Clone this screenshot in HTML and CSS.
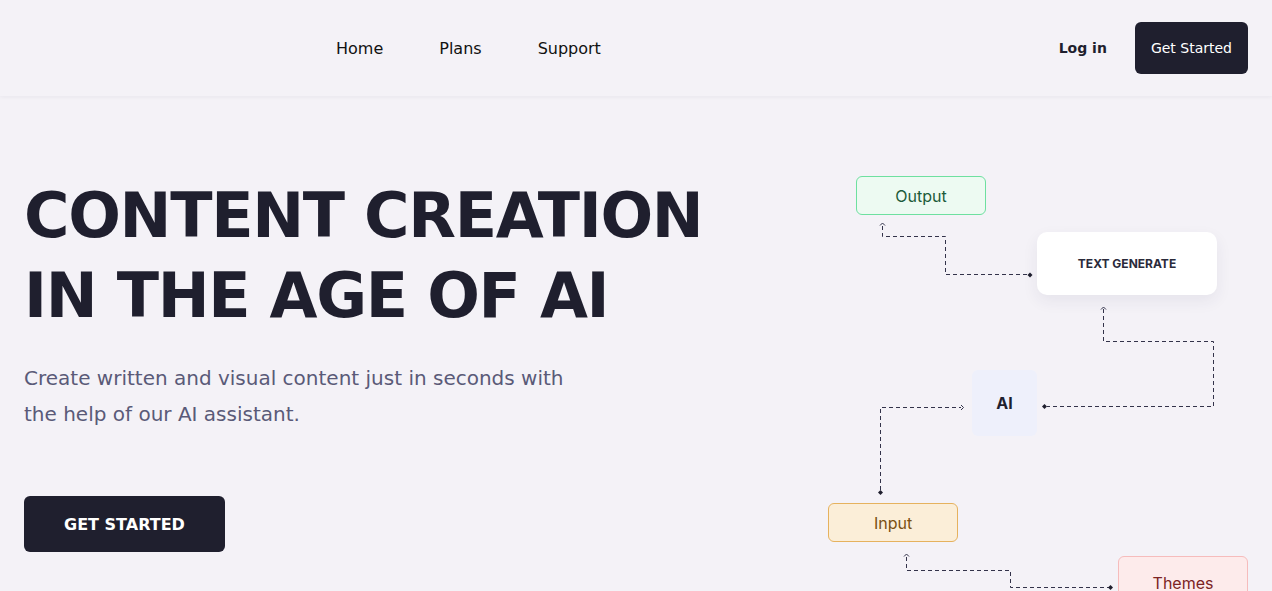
FILE: index.html
```html
<!DOCTYPE html>
<html lang="en">
<head>
<meta charset="utf-8">
<title>Content Creation in the Age of AI</title>
<link rel="stylesheet" href="styles.css">
</head>
<body>
<header class="header">
  <div class="logo-slot"></div>
  <nav class="nav">
    <a class="nav-link" href="#">Home</a>
    <a class="nav-link" href="#">Plans</a>
    <a class="nav-link" href="#">Support</a>
  </nav>
  <div class="actions">
    <a class="login" href="#">Log in</a>
    <a class="btn-small" href="#">Get Started</a>
  </div>
</header>
<main class="hero">
  <section class="hero-text">
    <h1 class="title">CONTENT CREATION<br>IN THE AGE OF AI</h1>
    <p class="lead">Create written and visual content just in seconds with the help of our AI assistant.</p>
    <a class="btn-main" href="#">GET STARTED</a>
  </section>
  <section class="diagram">
    <svg class="wires" width="430" height="430" viewBox="0 0 430 430">
      <g fill="none" stroke="#33334a" stroke-width="1" stroke-dasharray="4 3">
        <path d="M62.5 56 V66.5 H125.5 V104.5 H208"/>
        <path d="M283.5 139 V171.5 H393.5 V236.5 H227"/>
        <path d="M60.5 320 V237.5 H141"/>
        <path d="M86.5 387 V400.5 H190.5 V417.5 H289"/>
      </g>
      <g fill="none" stroke="#33334a" stroke-width="1">
        <path d="M60 55.5 L62.5 53 L65 55.5"/>
        <path d="M281 139.5 L283.5 137 L286 139.5"/>
        <path d="M141 235 L143.5 237.5 L141 240"/>
        <path d="M84 386.5 L86.5 384 L89 386.5"/>
      </g>
      <g fill="#1f1f2e">
        <path d="M210 102.5 L212.5 105 L210 107.5 L207.5 105 Z"/>
        <path d="M224.5 234 L227 236.5 L224.5 239 L222 236.5 Z"/>
        <path d="M60.5 320 L63 322.5 L60.5 325 L58 322.5 Z"/>
        <path d="M290.5 415 L293 417.5 L290.5 420 L288 417.5 Z"/>
      </g>
    </svg>
    <div class="node node-output">Output</div>
    <div class="node-card">TEXT GENERATE</div>
    <div class="node-ai">AI</div>
    <div class="node node-input">Input</div>
    <div class="node node-themes">Themes</div>
  </section>
</main>
</body>
</html>
```
FILE: styles.css
```css
* { box-sizing: border-box; }
html, body { margin: 0; padding: 0; }
body {
  background: #f4f2f7;
  font-family: "DejaVu Sans", sans-serif;
  color: #1f1f2e;
  overflow: hidden;
  height: 591px;
}
a { text-decoration: none; }

.header {
  height: 96px;
  display: flex;
  align-items: center;
  padding: 0 24px;
  background: #f4f2f7;
  box-shadow: 0 1px 4px rgba(30, 30, 60, 0.06);
  position: relative;
  z-index: 2;
}
.logo-slot { width: 312px; }
.nav { display: flex; gap: 56px; }
.nav-link { color: #111; font-size: 16px; }
.actions { margin-left: auto; display: flex; align-items: center; gap: 28px; }
.login { color: #1f1f2e; font-weight: bold; font-size: 14px; }
.btn-small {
  display: flex; align-items: center;
  height: 52px; padding: 0 16px;
  background: #1f1f2e; color: #fff;
  border-radius: 6px; font-size: 14px;
}

.hero { display: flex; align-items: flex-start; padding: 0 22px 0 24px; }
.hero-text { flex: 1; padding-top: 80px; }
.title {
  margin: 0;
  font-size: 62px;
  line-height: 80px;
  font-weight: bold;
  letter-spacing: -1.3px;
  color: #1f1f2e;
}
.lead {
  margin: 24px 0 0;
  width: 560px;
  font-size: 20px;
  line-height: 36px;
  color: #5a5a78;
}
.btn-main {
  display: inline-flex; align-items: center;
  margin-top: 64px;
  height: 56px; padding: 0 40px;
  background: #1f1f2e; color: #fff;
  border-radius: 6px;
  font-weight: bold; font-size: 16px;
}

.diagram {
  position: relative;
  width: 430px; height: 430px;
  margin-top: 74px;
  font-family: Inter, "Open Sans", sans-serif;
}
.wires { position: absolute; left: 0; top: 0; }
.node {
  position: absolute;
  width: 130px; height: 39px;
  display: flex; align-items: center; justify-content: center;
  border-radius: 6px; border: 1px solid;
  font-size: 16px; font-weight: 400;
}
.node-output { left: 36px; top: 6px; background: #edfaf2; border-color: #6ee0a0; color: #1d5a3a; }
.node-input { left: 8px; top: 333px; background: #fbeed8; border-color: #e6b25e; color: #7a5012; }
.node-themes { left: 298px; top: 386px; height: 54px; align-items: flex-start; padding-top: 16px; background: #fdebeb; border-color: #f6bcbc; color: #7c2424; }
.node-card {
  position: absolute; left: 217px; top: 62px;
  width: 180px; height: 63px;
  display: flex; align-items: center; justify-content: center;
  background: #fff; border-radius: 10px;
  box-shadow: 0 6px 16px rgba(40, 40, 80, 0.07);
  font-size: 12px; font-weight: 700; color: #2a2a3a;
}
.node-ai {
  position: absolute; left: 152px; top: 200px;
  width: 65px; height: 66px;
  display: flex; align-items: center; justify-content: center;
  background: #eef0fb; border-radius: 6px;
  font-size: 16px; font-weight: 700; color: #1f1f2e;
}
```
